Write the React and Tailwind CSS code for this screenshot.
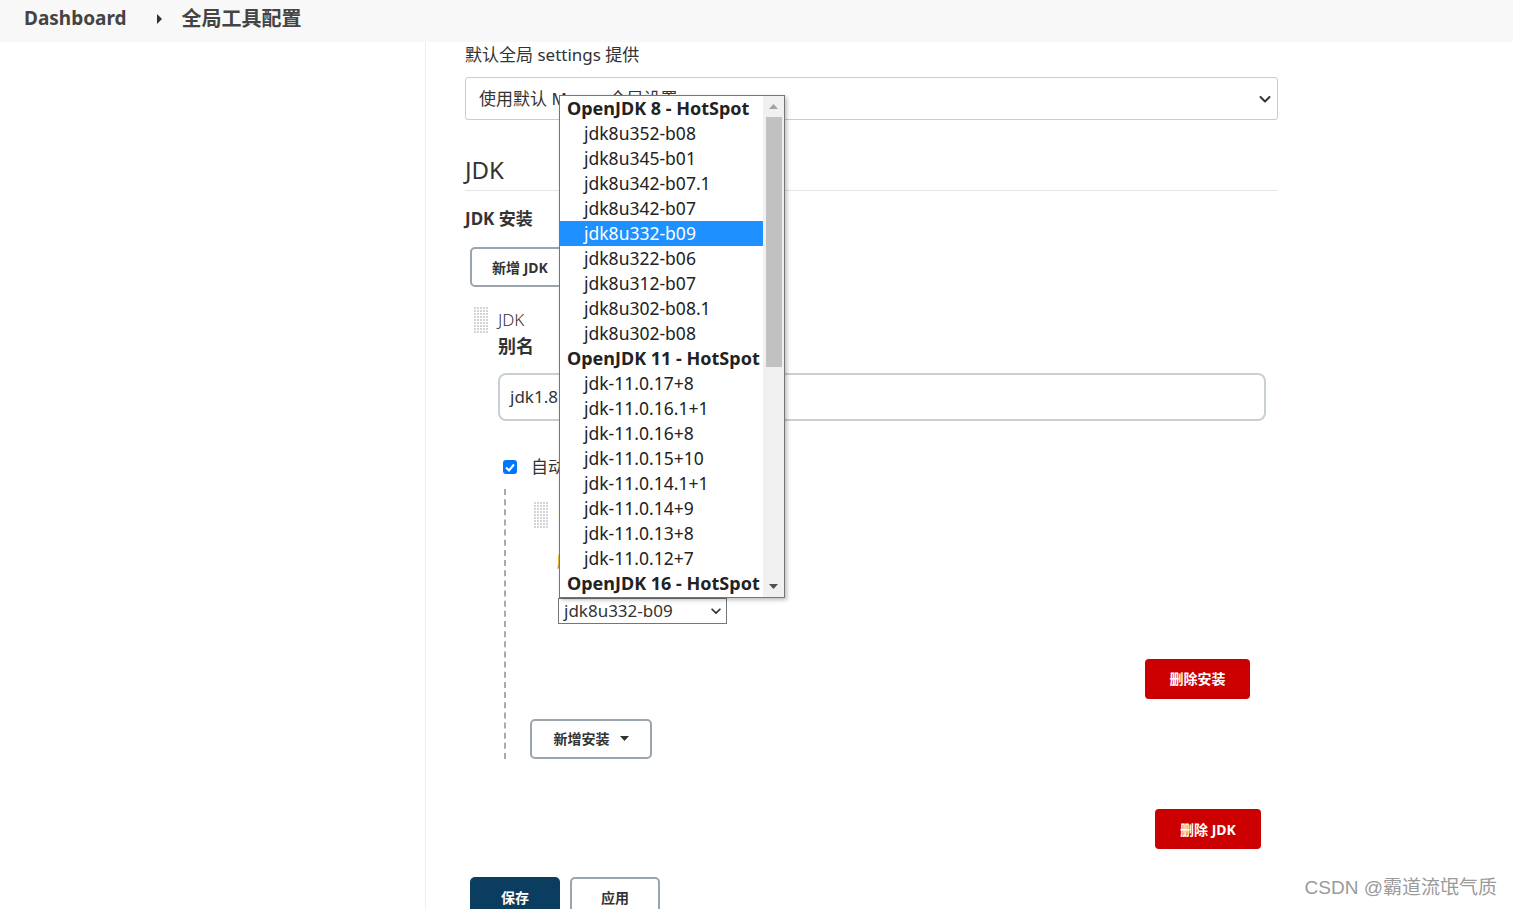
import React from "react";

const groups = [
  {
    title: "OpenJDK 8 - HotSpot",
    items: [
      "jdk8u352-b08",
      "jdk8u345-b01",
      "jdk8u342-b07.1",
      "jdk8u342-b07",
      "jdk8u332-b09",
      "jdk8u322-b06",
      "jdk8u312-b07",
      "jdk8u302-b08.1",
      "jdk8u302-b08",
    ],
  },
  {
    title: "OpenJDK 11 - HotSpot",
    items: [
      "jdk-11.0.17+8",
      "jdk-11.0.16.1+1",
      "jdk-11.0.16+8",
      "jdk-11.0.15+10",
      "jdk-11.0.14.1+1",
      "jdk-11.0.14+9",
      "jdk-11.0.13+8",
      "jdk-11.0.12+7",
    ],
  },
  { title: "OpenJDK 16 - HotSpot", items: [] },
];

function Chevron({ className }) {
  return (
    <svg viewBox="0 0 16 16" className={className} fill="none">
      <path d="M3.5 6l4.5 4.5L12.5 6" stroke="#333" strokeWidth="2" strokeLinecap="round" strokeLinejoin="round" />
    </svg>
  );
}

function Handle({ className }) {
  return (
    <svg width="14" height="26" className={className}>
      <defs>
        <pattern id="dots" width="3" height="3" patternUnits="userSpaceOnUse">
          <rect width="2" height="2" fill="#d4d4d4" />
        </pattern>
      </defs>
      <rect width="14" height="26" fill="url(#dots)" />
    </svg>
  );
}

function Dropdown() {
  const selected = "jdk8u332-b09";
  return (
    <div className="absolute left-[94px] top-[53px] w-[226px] h-[503px] bg-white border border-[#767676] shadow-[2px_2px_4px_rgba(0,0,0,0.25)] flex text-[17.5px] leading-[25px] text-[#222]">
      <div className="w-[203px] overflow-hidden">
        {groups.map((g) => (
          <div key={g.title}>
            <div className="h-[25px] pl-[7px] text-[18px] font-bold whitespace-nowrap">{g.title}</div>
            {g.items.map((it) => (
              <div
                key={it}
                className={`h-[25px] pl-[24px] whitespace-nowrap ${
                  it === selected ? "bg-[#1e90ff] text-white" : ""
                }`}
              >
                {it}
              </div>
            ))}
          </div>
        ))}
      </div>
      <div className="w-[21px] bg-[#f0f0f0] flex flex-col items-center">
        <div className="h-[21px] flex items-center justify-center">
          <svg width="9" height="5" viewBox="0 0 9 5">
            <path d="M0 5L4.5 0L9 5z" fill="#a3a3a3" />
          </svg>
        </div>
        <div className="w-[16px] h-[250px] bg-[#c1c1c1]" />
        <div className="flex-1" />
        <div className="h-[21px] flex items-center justify-center">
          <svg width="9" height="5" viewBox="0 0 9 5">
            <path d="M0 0L4.5 5L9 0z" fill="#505050" />
          </svg>
        </div>
      </div>
    </div>
  );
}

export default function App() {
  return (
    <div className="relative min-h-screen h-[909px] overflow-hidden bg-white text-[#333] font-['Noto_Sans','Noto_Sans_CJK_SC',sans-serif]">
      {/* breadcrumb */}
      <header className="h-[42px] bg-[#f8f8f8] flex items-center pl-6 pb-[5px] text-[19px] font-bold text-[#444]">
        <span>Dashboard</span>
        <svg width="6" height="10" viewBox="0 0 6 10" className="ml-[30px] mr-[19px]">
          <path d="M0 0L5 5L0 10z" fill="#333" />
        </svg>
        <span className="text-[20px]">全局工具配置</span>
      </header>

      <div className="flex">
        <aside className="w-[426px] shrink-0 h-[867px] border-r border-[#eee]" />

        <main className="relative w-[813px] ml-[39px]">
          <div className="pt-[1px] text-[17px] leading-[24px]">默认全局 settings 提供</div>
          <div className="mt-[10px] h-[43px] border border-[#ccc] rounded-[3px] flex items-center pl-[13px] pr-[4px] text-[17px]">
            <span className="flex-1">使用默认 Maven 全局设置</span>
            <Chevron className="w-[16px] h-[16px]" />
          </div>

          <h2 className="mt-[34px] text-[24px] leading-[32px] pb-[4px] border-b border-[#e5e5e5]">JDK</h2>
          <div className="mt-[16px] text-[17px] font-bold leading-[24px]">JDK 安装</div>

          <button className="mt-[16px] ml-[5px] h-[40px] w-[120px] border-2 border-[#9aa5ad] rounded-[5px] text-[14px] font-bold text-left pl-[20px] text-[#333]">
            新增 JDK
          </button>

          <div className="mt-[20px] ml-[9px] flex gap-[10px]">
            <Handle />
            <div className="flex-1">
              <div className="text-[17px] leading-[26px] font-light">JDK</div>
              <div className="text-[18px] font-bold leading-[26px]">别名</div>
              <div className="mt-[14px] mr-[12px] h-[48px] border-2 border-[#c8d0d4] rounded-[8px] flex items-center pl-[10px] text-[17px]">
                jdk1.8
              </div>

              <div className="mt-[35px] ml-[5px] flex items-center gap-[14px]">
                <div className="w-[14px] h-[14px] rounded-[3px] bg-[#0075ff] flex items-center justify-center">
                  <svg width="10" height="9" viewBox="0 0 10 9">
                    <path d="M1 4.5L4 7.5L9 1.5" stroke="white" strokeWidth="2" fill="none" />
                  </svg>
                </div>
                <span className="text-[17px] leading-[22px]">自动安装</span>
              </div>

              <div className="mt-[11px] ml-[6px] border-l-2 border-dashed border-[#aaa] h-[270px] relative">
                <div className="flex gap-[10px] pt-[13px] pl-[28px]">
                  <Handle />
                  <div className="text-[15px] text-[#c47f00]">安装</div>
                </div>
                <div className="ml-[51px] mt-[22px] text-[15px] text-[#c47f00]">版本</div>
                <div className="ml-[52px] mt-[25px] w-[169px] h-[26px] border border-[#767676] flex items-center pl-[5px] pr-[3px] text-[17px]">
                  <span className="flex-1">jdk8u332-b09</span>
                  <Chevron className="w-[14px] h-[14px]" />
                </div>
                <div className="flex justify-end mr-[28px] mt-[35px]">
                  <button className="h-[40px] w-[105px] bg-[#cc0000] rounded-[4px] text-white text-[14px] font-bold">删除安装</button>
                </div>
                <button className="mt-[20px] ml-[24px] h-[40px] w-[122px] border-2 border-[#9aa5ad] rounded-[5px] text-[14px] font-bold flex items-center justify-center gap-[10px]">
                  <span>新增安装</span>
                  <svg width="9" height="5" viewBox="0 0 9 5">
                    <path d="M0 0L4.5 5L9 0z" fill="#333" />
                  </svg>
                </button>
              </div>

              <div className="flex justify-end mr-[17px] mt-[50px]">
                <button className="h-[40px] w-[106px] bg-[#cc0000] rounded-[4px] text-white text-[14px] font-bold">删除 JDK</button>
              </div>
            </div>
          </div>

          <div className="mt-[28px] ml-[5px] flex gap-[10px]">
            <button className="h-[40px] w-[90px] bg-[#0b3d61] rounded-[5px] text-white text-[14px] font-bold">保存</button>
            <button className="h-[40px] w-[90px] border-2 border-[#9aa5ad] rounded-[5px] text-[14px] font-bold">应用</button>
          </div>

          <Dropdown />
        </main>
      </div>

      <div className="absolute right-[16px] bottom-[7px] text-[19px] text-[#9a9a9a] font-['Liberation_Sans','Noto_Sans_CJK_SC',sans-serif]">
        CSDN @霸道流氓气质
      </div>
    </div>
  );
}
